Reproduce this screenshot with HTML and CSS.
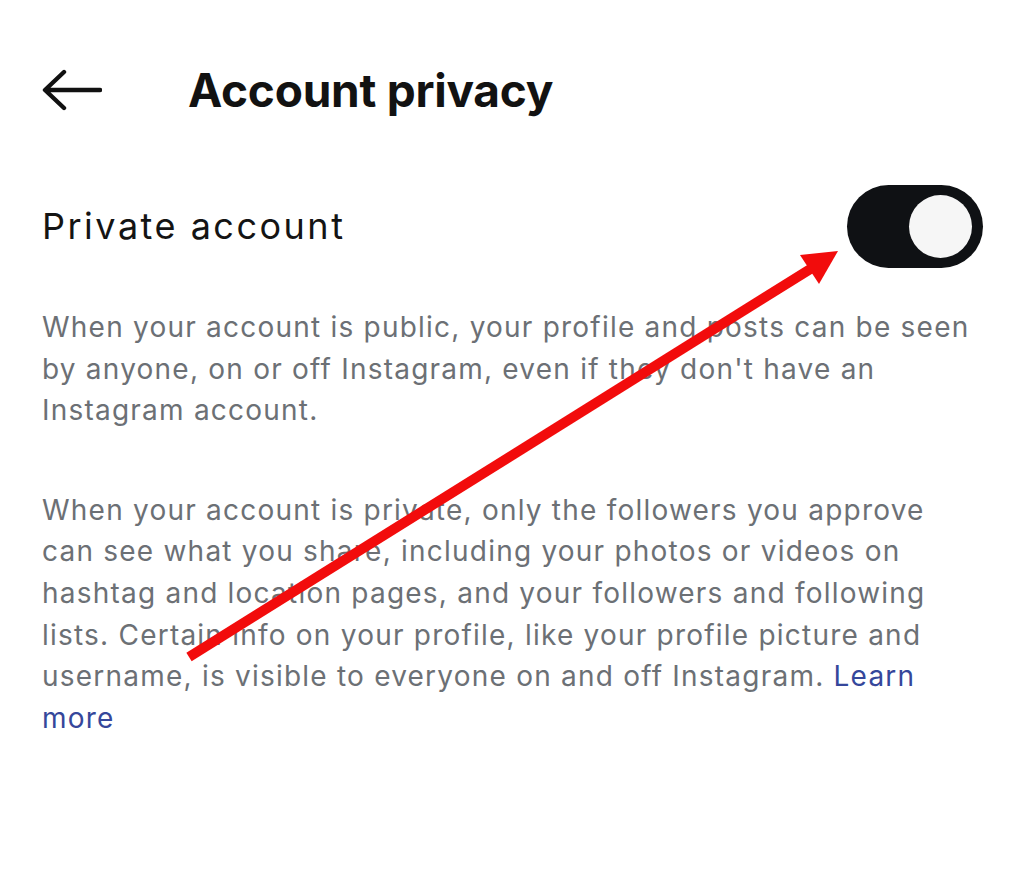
FILE: index.html
```html
<!DOCTYPE html>
<html>
<head>
<meta charset="utf-8">
<link rel="stylesheet" href="styles.css">
</head>
<body>
<div class="page">
  <header class="header">
    <svg class="back" width="60" height="44" viewBox="0 0 60 44">
      <path d="M58 22 H4 M22 4 L3 22 L22 40" fill="none" stroke="#111" stroke-width="4.4" stroke-linecap="round" stroke-linejoin="round"/>
    </svg>
    <h1 class="title">Account privacy</h1>
  </header>
  <div class="row">
    <span class="row-label">Private account</span>
    <div class="toggle"><div class="knob"></div></div>
  </div>
  <p class="desc">When your account is public, your profile and posts can be seen by anyone, on or off Instagram, even if they don't have an Instagram account.</p>
  <p class="desc second">When your account is private, only the followers you approve can see what you share, including your photos or videos on hashtag and location pages, and your followers and following lists. Certain info on your profile, like your profile picture and username, is visible to everyone on and off Instagram. <a class="link" href="#">Learn more</a></p>
</div>
<svg class="annot" width="1024" height="893" viewBox="0 0 1024 893">
  <line x1="189" y1="657" x2="812" y2="268" stroke="#f20c0c" stroke-width="10"/>
  <polygon points="838,251 800,255 819,284" fill="#f20c0c"/>
</svg>
</body>
</html>
```
FILE: styles.css
```css
html, body {
  margin: 0;
  padding: 0;
  background: #fff;
}
body {
  font-family: Inter, "Noto Sans", sans-serif;
  width: 1024px;
  height: 893px;
  overflow: hidden;
  position: relative;
}
.page {
  padding: 0 49px 0 42px;
}
.header {
  display: flex;
  align-items: center;
  height: 90px;
  padding-top: 45px;
}
.back {
  display: block;
  flex: none;
}
.title {
  margin: 0 0 0 86px;
  font-size: 46px;
  font-weight: 700;
  letter-spacing: -0.25px;
  color: #121212;
}
.row {
  display: flex;
  justify-content: space-between;
  align-items: center;
  margin-top: 49px;
  margin-right: -8px;
  height: 84px;
}
.row-label {
  font-size: 36px;
  letter-spacing: 2.5px;
  color: #141414;
}
.toggle {
  width: 136px;
  height: 83px;
  border-radius: 42px;
  background: #0f1114;
  display: flex;
  align-items: center;
  justify-content: flex-end;
  padding-right: 11px;
  box-sizing: border-box;
}
.knob {
  width: 63px;
  height: 63px;
  border-radius: 50%;
  background: #f6f6f6;
}
.desc {
  margin: 39px 0 0;
  font-size: 28px;
  line-height: 41.6px;
  letter-spacing: 1.22px;
  color: #6c7075;
}
.desc.second {
  margin-top: 58px;
}
.link {
  color: #35479b;
  text-decoration: none;
}
.annot {
  position: absolute;
  left: 0;
  top: 0;
  pointer-events: none;
}
```
